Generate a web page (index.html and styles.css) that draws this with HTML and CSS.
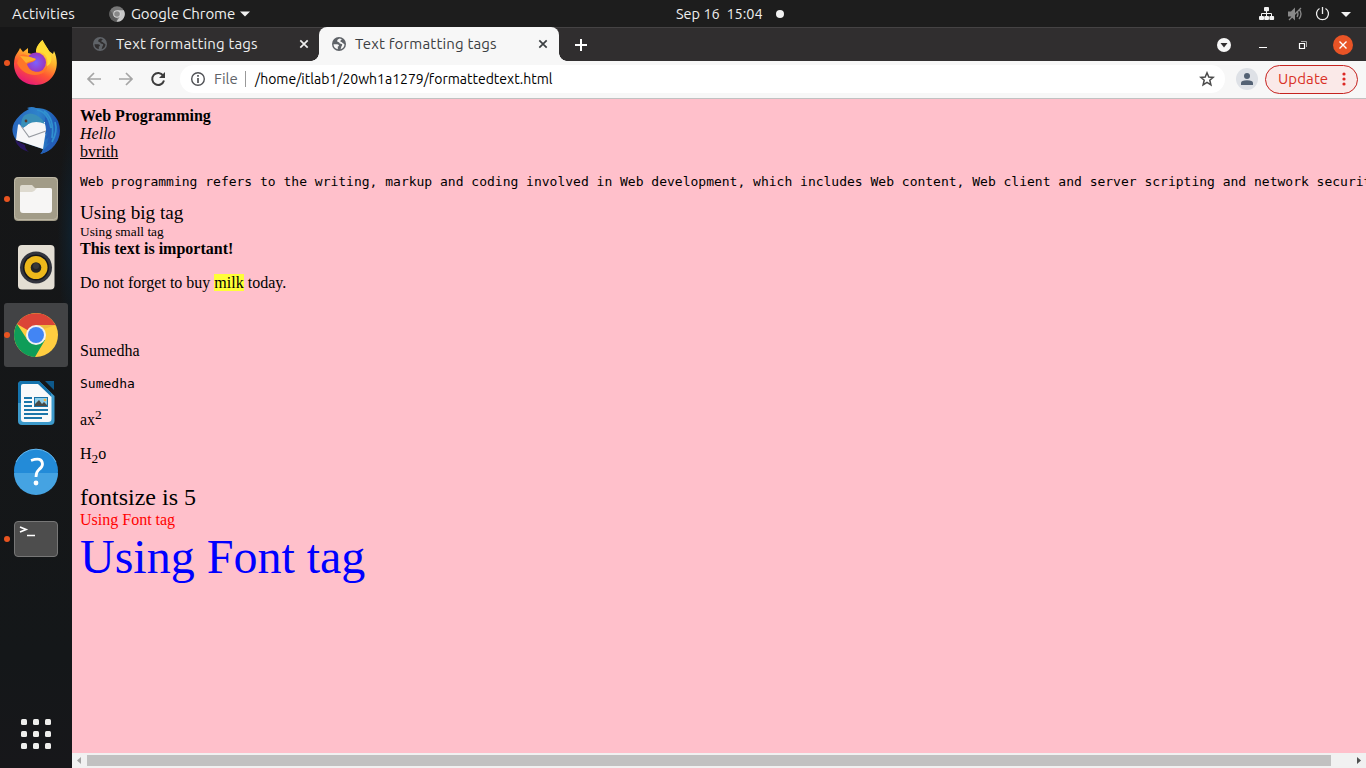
FILE: index.html
```html
<!DOCTYPE html>
<html lang="en">
<head>
<meta charset="utf-8">
<title>Text formatting tags</title>
<link rel="stylesheet" href="styles.css">
</head>
<body>
<svg class="defs" width="0" height="0">
  <symbol id="globe" viewBox="0 0 14 14">
    <circle cx="7" cy="7" r="7" fill="currentColor"/>
    <path d="M1.5 7.2H5.2Q7.2 7.2 7 9L5.8 9.6V12.3C3 11.6 1.5 9.6 1.5 7.2Z M7.8 1.5C6 2 5 3 5.2 4.3C5.5 5.3 7 4.8 7.3 5.6C7.4 6.6 8.4 7 9.6 7C10.6 7.2 10.2 8.8 9.4 9.4L8.6 12.3C11 11.6 12.4 9.8 12.5 7.6C12 6.6 11 6.6 10.4 5.8C9.8 5 9 5 8.2 4.2C8.2 3.2 9.6 3.2 9.8 2.2Z" fill="var(--land)"/>
  </symbol>
  <symbol id="close" viewBox="0 0 10 10"><path d="M1.3 1.3 L8.7 8.7 M8.7 1.3 L1.3 8.7" stroke="currentColor" stroke-width="1.7"/></symbol>
</svg>

<header class="topbar">
  <span class="activities">Activities</span>
  <svg class="app-icon" width="16" height="16" viewBox="0 0 16 16"><circle cx="8" cy="8" r="7.7" fill="#777"/><path d="M8 4.3 H14.8 A7.7 7.7 0 0 1 7.5 15.7 L11.2 9.9Z" fill="#c8c8c8"/><path d="M1.3 4.2 L4.8 10 L8 11.7 L7.5 15.7 A7.7 7.7 0 0 1 1.3 4.2" fill="#5c5c5c"/><circle cx="8" cy="8" r="3.8" fill="#d4d4d4"/><circle cx="8" cy="8" r="2.8" fill="#888"/></svg>
  <span class="app-name">Google Chrome</span>
  <svg class="app-arrow" width="10" height="6" viewBox="0 0 10 6"><path d="M0 .5H10L5 5.5Z" fill="#f2f2f2"/></svg>
  <span class="clock">Sep 16&nbsp; 15:04</span>
  <span class="notice"></span>
  <svg class="status" width="100" height="20" viewBox="1258 3 100 20">
    <g fill="#f2f2f2"><rect x="1264" y="6" width="5" height="4.2" rx="1"/><rect x="1259" y="15" width="5" height="4" rx="1"/><rect x="1264.2" y="15" width="4.8" height="4" rx="1"/><rect x="1269.3" y="15" width="4.8" height="4" rx="1"/><path d="M1346 11H1356L1351 16Z" transform="translate(-5 0)"/></g>
    <path d="M1266.5 10V15M1261.5 15V12.5H1271.5V15" fill="none" stroke="#f2f2f2"/>
    <path d="M1288 10.5H1291L1295 6.5V19.5L1291 15.5H1288Z" fill="#898989"/>
    <path d="M1289 19L1301 7M1297 10Q1299 13 1297 16M1299 8Q1303 13 1299 18" fill="none" stroke="#898989" stroke-width="1.3"/>
    <path d="M1319.5 7.5A6 6 0 1 0 1325.5 7.5M1322.5 6V13" fill="none" stroke="#eee" stroke-width="1.3"/>
  </svg>
</header>

<div class="workspace">
  <nav class="dock">
    <div class="slot running"><svg width="48" height="48" viewBox="0 0 48 48">
      <defs><linearGradient id="fox" x1=".75" y1=".05" x2=".3" y2="1"><stop offset="0" stop-color="#fff44f"/><stop offset=".35" stop-color="#ffb32c"/><stop offset=".65" stop-color="#ff5533"/><stop offset="1" stop-color="#e5157c"/></linearGradient><radialGradient id="orb"><stop offset="0" stop-color="#7a62ff"/><stop offset="1" stop-color="#9c35bd"/></radialGradient></defs>
      <path d="M3 18C4 15 7 12 8 9L11 13L16 9V14L20 15L24 16C24 10 26 5 30.500 1C32 6 35 8 37 12L41 15L42 12C50 29 40 46 24 46C7 46-1 32 3 18Z" fill="url(#fox)"/>
      <circle cx="24" cy="23.500" r="10" fill="url(#orb)"/>
      <path d="M24 13C33 12 37 18 35 27C40 25 41 18 37 12L30.500 1C25 6 24 9 24 13Z" fill="#ffdc35"/>
      <path d="M8 17C11 14 15 16 18 18L24 20C23 23 19 23 15 25C17 34 30 36 35 27C36 38 12 41 5 24Z" fill="#ff7629"/>
      <path d="M8 17L18 18L24 20C22 22 18 22 14 24Z" fill="#ffb02b"/>
    </svg></div>
    <div class="slot"><svg width="48" height="48" viewBox="0 0 48 48">
      <defs><linearGradient id="bird" x1="0" x2="1"><stop offset="0" stop-color="#2866bd"/><stop offset=".55" stop-color="#2e83cb"/><stop offset="1" stop-color="#1b4fae"/></linearGradient></defs>
      <path d="M2 16Q7 7 17 2L15 1Q20-1 24 1Q39 1 46 14Q50 24 46 33Q41 43 29 47L31 42L4 33Q-2 24 2 16Z" fill="url(#bird)"/>
      <path d="M3 33Q6 42 17 45Q13 42 13 38Z" fill="#28165f"/>
      <path d="M7 17L11 21L19 15H33L34 23L31 42L4 33L6 18Z" fill="#f6f6f8"/>
      <path d="M9 19L17 30L34 24" fill="none" stroke="#969aa1" stroke-width="1.1"/>
      <path d="M9 19Q12 22 16 17Q24 13 33 17Q30 11 24 8Q18 5 13 8Q9 11 9 19Z" fill="#398fb8"/><circle cx="14" cy="14" r="1.4" fill="#58392c"/>
      <path d="M33 17Q36 21 33 27L36 25L33 33L37 30L35 37L39 35L28 47Q43 44 47 28Q46 16 33 10Z" fill="#245fb9"/>
      <path d="M25 3Q36 5 39 21M32 4Q43 12 40 31M43 15Q46 24 40 35" fill="none" stroke="#3191cf" stroke-width="1.7"/>
    </svg></div>
    <div class="slot running"><svg width="48" height="48" viewBox="0 0 48 48"><rect x="2" y="2" width="44" height="44" rx="4" fill="#a29c88"/><rect x="2.5" y="2.5" width="43" height="42" rx="4" fill="none" stroke="#beb8a6"/><path d="M8 12Q8 10 10 10H20L23 13H38Q40 13 40 15V20H8Z" fill="#dedacf"/><path d="M8 17H20Q22 17 24 14L25 13H38Q40 13 40 15V35Q40 38 37 38H11Q8 38 8 35Z" fill="#f7f6f5"/></svg></div>
    <div class="slot"><svg width="48" height="48" viewBox="0 0 48 48"><rect x="6" y="2" width="36.5" height="44.5" rx="4" fill="#e3ded3"/><circle cx="24" cy="24.5" r="16" fill="#32343d"/><circle cx="24" cy="24.5" r="13" fill="#14151a"/><circle cx="24" cy="24.5" r="11.5" fill="#edb81b"/><circle cx="24" cy="24.5" r="5.3" fill="#252525"/><circle cx="24" cy="23" r="3" fill="#393939"/></svg></div>
    <div class="slot running selected"><svg width="48" height="48" viewBox="0 0 48 48"><circle cx="24" cy="24" r="22" fill="#ffcd40"/><path d="M24 24L5 13A22 22 0 0 1 43.5 14H24Z" fill="#db4437"/><path d="M5 13A22 22 0 0 0 23 46L33 29L15.5 29Z" fill="#0f9d58"/><path d="M24 14H43.5L32 18Z" fill="#b98b37" opacity=".25"/><circle cx="24" cy="24" r="10" fill="#f1f1f1"/><circle cx="24" cy="24" r="8" fill="#4285f4"/></svg></div>
    <div class="slot"><svg width="48" height="48" viewBox="0 0 48 48"><path d="M10 2H27L42.5 17V42Q42.5 46 38 46H10Q6 46 6 42V6Q6 2 10 2Z" fill="#3d9acb"/><path d="M10 2H27L39 14V24H6V6Q6 2 10 2Z" fill="#1473ad"/><path d="M33 2H42V11Z" fill="#0e598b"/><path d="M11 5H26L39.5 18V40Q39.5 43 36 43H12Q9 43 9 40V7Q9 5 11 5Z" fill="#f8f9fa"/><path d="M12 19H20M12 23H20M12 27H20M12 31H36M12 35H36M12 39H30" stroke="#1b76aa" stroke-width="2"/><rect x="22" y="18" width="14" height="10" fill="#1971a5"/><rect x="23" y="19" width="12" height="8" fill="#8dcde9"/><path d="M23 27V25L27 21L30 25L32 23L35 26V27Z" fill="#494a46"/><circle cx="33" cy="21" r="1.3" fill="#f5b23e"/></svg></div>
    <div class="slot"><svg width="48" height="48" viewBox="0 0 48 48"><circle cx="24" cy="24" r="22" fill="#238bd8"/><path d="M2 26H46A22 22 0 0 1 2 26Z" fill="#45a3e2"/><path d="M4 15A22 22 0 0 1 44 15" fill="none" stroke="#65b8ef"/><path d="M19 13.500Q30 9.500 30.500 17Q30.500 20 27 22.500Q24 25 24 30" fill="none" stroke="#fff" stroke-width="2.8"/><circle cx="24" cy="36" r="2.4" fill="#fff"/></svg></div>
    <div class="slot running"><svg width="48" height="48" viewBox="0 0 48 48"><rect x="2.5" y="6.5" width="43" height="35" rx="3.5" fill="#4d4d4d" stroke="#777"/><path d="M8 12L14 14.500L8 17M15 20.500H23" fill="none" stroke="#fff" stroke-width="1.7"/></svg></div>
    <div class="launcher"><i></i><i></i><i></i><i></i><i></i><i></i><i></i><i></i><i></i></div>
  </nav>

  <main class="browser">
    <div class="tabstrip">
      <div class="tab"><svg class="globe" width="14" height="14"><use href="#globe"/></svg><span class="tab-title">Text formatting tags</span><svg class="tab-close" width="10" height="10"><use href="#close"/></svg></div>
      <div class="tab active"><svg class="globe" width="14" height="14"><use href="#globe"/></svg><span class="tab-title">Text formatting tags</span><svg class="tab-close" width="10" height="10"><use href="#close"/></svg></div>
      <svg class="new-tab" width="12" height="12" viewBox="0 0 12 12"><path d="M6 0V12M0 6H12" stroke="#fff" stroke-width="2"/></svg>
      <svg class="window-controls" width="142" height="26" viewBox="1216 31 142 26"><circle cx="1224" cy="44" r="7" fill="#f7f7f7"/><path d="M1220.5 42H1227.5L1224 46.5Z" fill="#302e2f"/><path d="M1259 46.5H1267" stroke="#fff"/><path d="M1299.5 42.5H1304.5V47.5H1299.5Z" fill="none" stroke="#fff" stroke-width="1.2"/><path d="M1301 40.5H1306.5V46" fill="none" stroke="#aaa"/><circle cx="1343" cy="44" r="10" fill="#e95426"/><path d="M1339.5 40.5L1346.5 47.5M1346.5 40.5L1339.5 47.5" stroke="#fff" stroke-width="1.4"/></svg>
    </div>
    <div class="toolbar">
      <svg class="nav-buttons" width="84" height="20" viewBox="84 69 84 20"><path d="M101 79H88M94 73L88 79L94 85M119 79H132M126 73L132 79L126 85" fill="none" stroke="#a5a5a5" stroke-width="1.7"/><path d="M163.2 75.6A6 6 0 1 0 164 80.6" fill="none" stroke="#3c3c3c" stroke-width="2"/><path d="M165 72V78H159Z" fill="#3c3c3c"/></svg>
      <div class="omnibox">
        <svg width="14" height="14" viewBox="0 0 14 14"><circle cx="7" cy="7" r="6.3" fill="none" stroke="#505256" stroke-width="1.4"/><path d="M7 6V11M7 3V4.8" stroke="#505256" stroke-width="1.7"/></svg>
        <span class="scheme">File</span><span class="divider"></span><span class="url">/home/itlab1/20wh1a1279/formattedtext.html</span>
        <svg class="star" width="16" height="16" viewBox="0 0 16 16"><path d="M8 1.8L9.8 6L14.2 6.4L10.8 9.3L11.9 13.8L8 11.4L4.1 13.8L5.2 9.3L1.8 6.4L6.2 6Z" fill="none" stroke="#4b4b4b" stroke-width="1.5"/></svg>
      </div>
      <svg class="avatar" width="22" height="22" viewBox="0 0 22 22"><circle cx="11" cy="11" r="11" fill="#dee1e6"/><circle cx="11" cy="8" r="3" fill="#536173"/><path d="M5 17V15Q5 12.5 11 12.3Q17 12.5 17 15V17Z" fill="#536173"/></svg>
      <div class="update"><span>Update</span><svg width="4" height="14" viewBox="0 0 4 14"><g fill="#dc2723"><circle cx="2" cy="2" r="1.6"/><circle cx="2" cy="7" r="1.6"/><circle cx="2" cy="12" r="1.6"/></g></svg></div>
    </div>
    <article class="page">
      <b>Web Programming</b><br><i>Hello</i><br><u>bvrith</u>
      <pre class="intro">Web programming refers to the writing, markup and coding involved in Web development, which includes Web content, Web client and server scripting and network securit</pre>
      <div class="big">Using big tag</div>
      <div class="small">Using small tag</div>
      <strong>This text is important!</strong>
      <p>Do not forget to buy <mark>milk</mark> today.</p>
      <br>
      <p>Sumedha</p>
      <pre>Sumedha</pre>
      <p>ax<sup>2</sup></p>
      <p>H<sub>2</sub>o</p>
      <div class="size-five">fontsize is 5</div>
      <div class="red">Using Font tag</div>
      <div class="blue">Using Font tag</div>
    </article>
    <div class="scrollbar"><svg width="15" height="15" viewBox="0 0 15 15"><path d="M9 4V11L5 7.5Z" fill="#a3a3a3"/></svg><div class="thumb"></div><svg class="right" width="15" height="15" viewBox="0 0 15 15"><path d="M6 4V11L10 7.5Z" fill="#505050"/></svg></div>
  </main>
</div>
</body>
</html>
```
FILE: styles.css
```css
* { box-sizing: border-box; }
body { margin: 0; width: 1366px; height: 768px; overflow: hidden; display: flex; flex-direction: column; background: #161718; font: 15px/20px Ubuntu, "Noto Sans", sans-serif; }
svg { display: block; flex: none; }
.defs { display: none; }
.topbar { height: 27px; flex: none; display: flex; align-items: center; padding: 0 8px 0 12px; background: #1d1d1d; color: #f0f0f0; white-space: nowrap; }
.activities { width: 97px; letter-spacing: .15px; }
.app-icon { margin-right: 6px; }
.app-name { width: 109px; letter-spacing: -.08px; }
.clock { margin-left: 426px; width: 100px; font-size: 14.5px; }
.notice { width: 8px; height: 8px; border-radius: 50%; background: #f2f2f2; }
.status { margin-left: auto; }
.workspace { height: 741px; display: flex; }
.dock { width: 72px; flex: none; padding: 4px; display: flex; flex-direction: column; gap: 4px; background: radial-gradient(ellipse at 100% 28%, #10202c 0, transparent 14%), linear-gradient(#161617, #141719 85%, #17171a); }
.slot { position: relative; width: 64px; height: 64px; flex: none; display: grid; place-items: center; border-radius: 3px; }
.selected { background: #424345; }
.running::before { content: ""; position: absolute; left: 0; top: 29px; width: 6px; height: 6px; border-radius: 50%; background: #e95420; }
.launcher { display: grid; grid-template-columns: repeat(3, 6px); gap: 6px; margin: auto auto 15px 17px; }
.launcher i { width: 6px; height: 6px; border-radius: 1.5px; background: #eeeeec; }
.browser { width: 1294px; display: flex; flex-direction: column; background: #f7f7f7; }
.tabstrip { height: 34px; flex: none; display: flex; align-items: center; background: #302e2f; border-top: 1px solid #454344; padding-right: 8px; }
.tab { position: relative; height: 34px; width: 247px; margin-top: -1px; display: flex; align-items: center; padding: 0 10px 0 21px; color: #eee; --land: #302e2f; }
.tab .globe { color: #5f6368; margin-right: 9px; }
.tab-title { white-space: nowrap; letter-spacing: .17px; }
.tab-close { margin-left: auto; }
.active { width: 240px; padding: 0 11px 0 13px; background: #f7f7f7; color: #3c4043; border-radius: 8px 8px 0 0; --land: #f7f7f7; }
.active::before, .active::after { content: ""; position: absolute; bottom: 0; width: 8px; height: 8px; }
.active::before { left: -8px; background: radial-gradient(circle at 0 0, transparent 7.5px, #f7f7f7 8px); }
.active::after { right: -8px; background: radial-gradient(circle at 100% 0, transparent 7.5px, #f7f7f7 8px); }
.new-tab { margin-left: 16px; }
.window-controls { margin-left: auto; }
.toolbar { height: 38px; flex: none; display: flex; align-items: center; padding: 0 8px 1px 12px; background: #f7f7f7; border-bottom: 1px solid #c1c1c1; }
.omnibox { width: 1045px; height: 28px; margin-left: 12px; padding: 0 10px 0 11px; display: flex; align-items: center; border-radius: 14px; background: #fff; }
.scheme { margin-left: 9px; width: 31px; color: #5f6368; }
.divider { width: 1px; height: 16px; margin-right: 9px; background: #999; }
.url { color: #000; white-space: nowrap; font-size: 14px; }
.star { margin-left: auto; }
.avatar { margin-left: 11px; }
.update { width: 93px; height: 29px; margin-left: 7px; padding: 0 11px 0 12px; display: flex; align-items: center; justify-content: space-between; border: 1px solid #c5221f; border-radius: 15px; background: #fae9e8; color: #d93025; letter-spacing: .1px; }
.page { height: 654px; flex: none; padding: 8px; overflow: hidden; background: #ffc0cb; color: #000; font: 16px "Liberation Serif", serif; }
.page p { margin: 16px 0; }
.page pre { margin: 13px 0; font: 13px "DejaVu Sans Mono", monospace; }
.big { font-size: 19.2px; }
.small { font-size: 13.333px; }
.page mark { background: #ffff37; color: #000; }
.size-five { font-size: 24px; }
.red { color: #f00; }
.blue { color: #00f; font-size: 48px; }
.scrollbar { height: 15px; flex: none; display: flex; align-items: center; background: #f1f1f1; }
.thumb { width: 1244px; height: 11px; background: #c1c1c1; }
.right { margin-left: auto; }
```
